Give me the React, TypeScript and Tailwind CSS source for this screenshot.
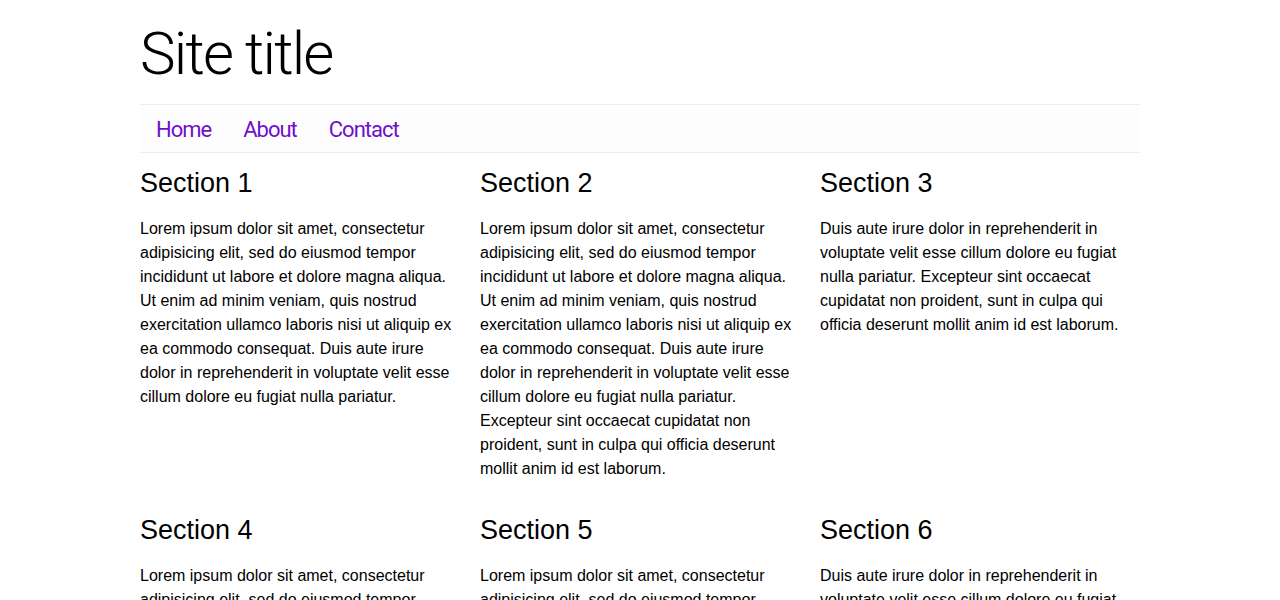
import React from "react";

const LONG =
  "Lorem ipsum dolor sit amet, consectetur adipisicing elit, sed do eiusmod tempor incididunt ut labore et dolore magna aliqua. Ut enim ad minim veniam, quis nostrud exercitation ullamco laboris nisi ut aliquip ex ea commodo consequat. Duis aute irure dolor in reprehenderit in voluptate velit esse cillum dolore eu fugiat nulla pariatur.";
const EXC =
  "Excepteur sint occaecat cupidatat non proident, sunt in culpa qui officia deserunt mollit anim id est laborum.";
const SHORT =
  "Duis aute irure dolor in reprehenderit in voluptate velit esse cillum dolore eu fugiat nulla pariatur. " + EXC;

const sections = [
  { title: "Section 1", text: LONG },
  { title: "Section 2", text: LONG + " " + EXC },
  { title: "Section 3", text: SHORT },
  { title: "Section 4", text: LONG },
  { title: "Section 5", text: LONG + " " + EXC },
  { title: "Section 6", text: SHORT },
];

export default function App() {
  return (
    <div className="min-h-screen bg-white text-black font-['Liberation_Sans',Arial,sans-serif]">
      <div className="mx-auto w-[1000px]">
        <header className="pt-[23px] pb-[19px]">
          <h1 className="text-[60px] leading-[62px] font-light tracking-[-1.8px] font-['Roboto',sans-serif]">
            Site title
          </h1>
        </header>
        <nav className="flex h-[49px] items-center border-y border-[#ececec] bg-[#fdfdfd]">
          {["Home", "About", "Contact"].map((l) => (
            <a
              key={l}
              href="#"
              className="px-4 pt-[3px] text-[22px] leading-[44px] tracking-[-1px] text-[#7010c8] font-['Roboto',sans-serif]"
            >
              {l}
            </a>
          ))}
        </nav>
        <main className="grid grid-cols-3 gap-x-5 gap-y-[33px] pt-[14px]">
          {sections.map((s) => (
            <section key={s.title}>
              <h2 className="text-[27px] leading-[32px] font-normal">{s.title}</h2>
              <p className="mt-[18px] text-[16px] leading-[24px]">{s.text}</p>
            </section>
          ))}
        </main>
      </div>
    </div>
  );
}
